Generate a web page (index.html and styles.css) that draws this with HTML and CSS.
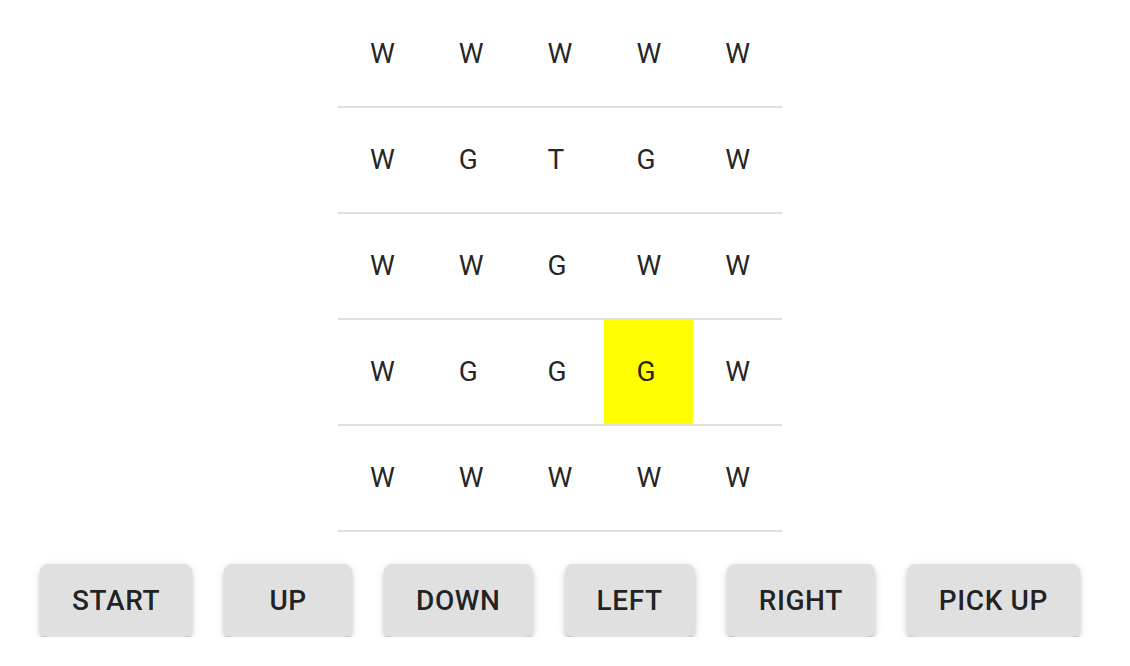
FILE: index.html
```html
<!DOCTYPE html>
<html>
<head>
<meta charset="utf-8">
<link rel="stylesheet" href="styles.css">
</head>
<body>
<div class="app">
  <table class="grid">
    <tbody>
      <tr><td>W</td><td>W</td><td>W</td><td>W</td><td>W</td></tr>
      <tr><td>W</td><td>G</td><td>T</td><td>G</td><td>W</td></tr>
      <tr><td>W</td><td>W</td><td>G</td><td>W</td><td>W</td></tr>
      <tr><td>W</td><td>G</td><td>G</td><td class="current">G</td><td>W</td></tr>
      <tr><td>W</td><td>W</td><td>W</td><td>W</td><td>W</td></tr>
    </tbody>
  </table>
  <div class="controls">
    <button class="btn">START</button>
    <button class="btn">UP</button>
    <button class="btn">DOWN</button>
    <button class="btn">LEFT</button>
    <button class="btn">RIGHT</button>
    <button class="btn">PICK UP</button>
  </div>
</div>
</body>
</html>
```

FILE: styles.css
```css
html, body {
  margin: 0;
  padding: 0;
  background: #ffffff;
}

.app {
  width: 1120px;
  padding-top: 2px;
  display: flex;
  flex-direction: column;
  align-items: center;
  font-family: Roboto, "Liberation Sans", sans-serif;
}

.grid {
  border-collapse: collapse;
  border-spacing: 0;
}

.grid td {
  padding: 32px;
  font-size: 28px;
  line-height: 40px;
  font-weight: 400;
  color: rgba(0, 0, 0, 0.87);
  border-bottom: 2px solid rgb(224, 224, 224);
  text-align: left;
}

.grid td.current {
  background: #ffff00;
}

.controls {
  display: flex;
  gap: 32px;
  margin-top: 32px;
}

.btn {
  font-family: Roboto, "Liberation Sans", sans-serif;
  font-size: 28px;
  font-weight: 500;
  line-height: 49px;
  letter-spacing: 0.6px;
  text-transform: uppercase;
  color: rgba(0, 0, 0, 0.87);
  background: #e0e0e0;
  border: none;
  border-radius: 8px;
  padding: 12px 32px;
  min-width: 128px;
  box-shadow: 0px 6px 2px -4px rgba(0,0,0,0.2), 0px 4px 4px 0px rgba(0,0,0,0.14), 0px 2px 10px 0px rgba(0,0,0,0.12);
  cursor: pointer;
}
```
